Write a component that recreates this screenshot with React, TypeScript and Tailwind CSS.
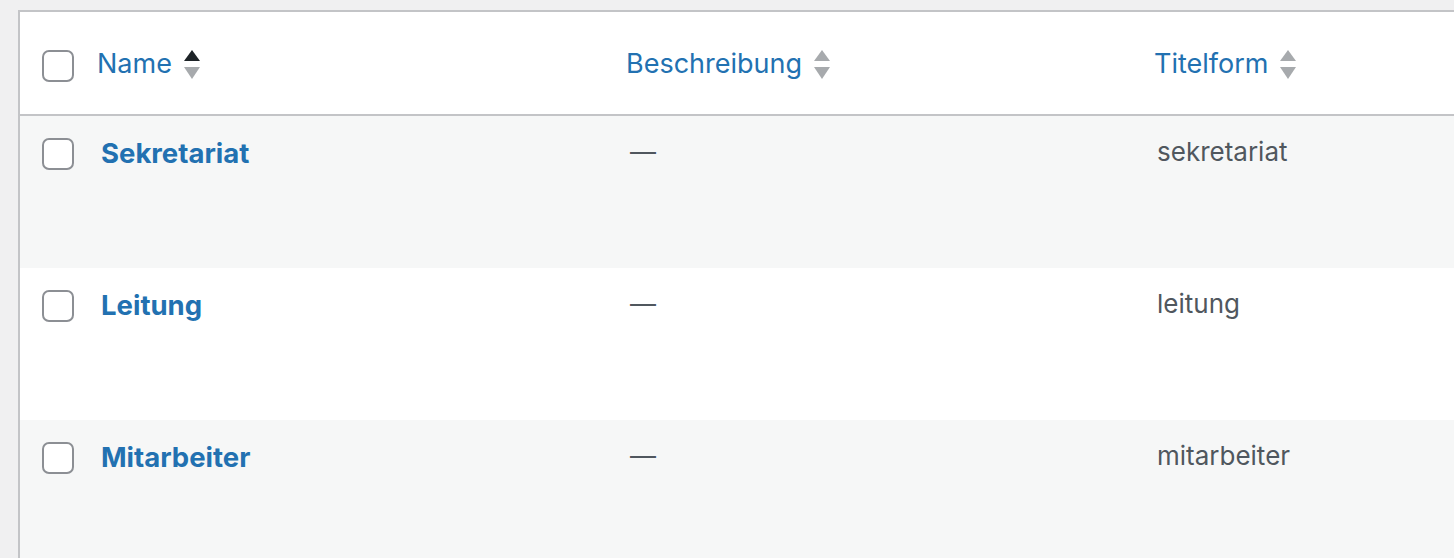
import React from 'react'

const rows = [
  { name: 'Sekretariat', slug: 'sekretariat' },
  { name: 'Leitung', slug: 'leitung' },
  { name: 'Mitarbeiter', slug: 'mitarbeiter' },
]

function Checkbox({ className = '' }: { className?: string }) {
  return (
    <span
      className={`block h-[32px] w-[32px] rounded-[7px] border-2 border-[#8c8f94] bg-white ${className}`}
    />
  )
}

function SortArrows({ active = false }: { active?: boolean }) {
  return (
    <svg width="16" height="30" viewBox="0 0 16 30" className="ml-[12px]">
      <path d="M8 0 L16 11 L0 11 Z" fill={active ? '#1d2327' : '#a7aaad'} />
      <path d="M0 17 L16 17 L8 29 Z" fill="#a7aaad" />
    </svg>
  )
}

function HeaderCell({ label, active = false }: { label: string; active?: boolean }) {
  return (
    <div className="flex items-center pt-[3px]">
      <span className="text-[27px] text-[#2271b1]">{label}</span>
      <SortArrows active={active} />
    </div>
  )
}

export default function App() {
  return (
    <div
      className="h-[558px] overflow-hidden bg-[#f0f0f1] pl-[18px] pt-[10px]"
      style={{ fontFamily: 'Inter, "Noto Sans", sans-serif' }}
    >
      <div className="w-[1500px] border-l-2 border-t-2 border-[#c3c4c7] bg-white">
        <div className="grid h-[104px] grid-cols-[77px_529px_528px_1fr] items-center border-b-2 border-[#c3c4c7]">
          <div className="pl-[22px] pt-[6px]">
            <Checkbox />
          </div>
          <HeaderCell label="Name" active />
          <HeaderCell label="Beschreibung" />
          <HeaderCell label="Titelform" />
        </div>

        {rows.map((row, index) => (
          <div
            key={row.slug}
            className={[
              'grid h-[152px] grid-cols-[77px_529px_528px_1fr] items-start',
              index % 2 === 0 ? 'bg-[#f6f7f7]' : 'bg-white',
            ].join(' ')}
          >
            <div className="pl-[22px] pt-[22px]">
              <Checkbox />
            </div>
            <div className="pl-[4px] pt-[17px] text-[27.5px] font-bold leading-[40px] text-[#2271b1]">
              {row.name}
            </div>
            <div className="pl-[4px] pt-[16px] text-[26px] leading-[40px] text-[#50575e]">—</div>
            <div className="pl-[3px] pt-[16px] text-[26px] leading-[40px] text-[#50575e]">
              {row.slug}
            </div>
          </div>
        ))}
      </div>
    </div>
  )
}
